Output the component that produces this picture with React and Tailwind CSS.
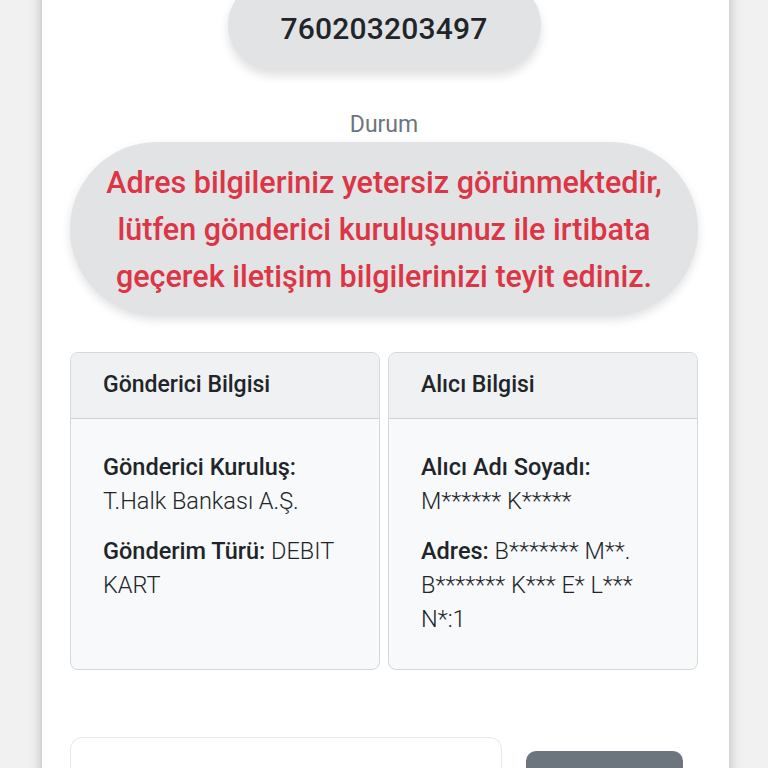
export default function App() {
    return (
        <div className="min-h-screen bg-[#f1f1f1] overflow-hidden" style={{ fontFamily: 'Roboto, "Noto Sans", sans-serif' }}>
            <div className="mx-[42px] w-[687px] bg-white shadow-[0_0_12px_rgba(0,0,0,0.25)] pl-[28px] pr-[31px] h-[800px] -mt-[20px]">
                <div className="flex justify-center">
                    <div className="w-[313px] h-[90px] rounded-full bg-[#e2e3e5] shadow-[0_6px_10px_rgba(0,0,0,0.12)] flex items-center justify-center pt-[6px]">
                        <span className="text-[30px] font-medium text-[#212529] tracking-[0.2px]">760203203497</span>
                    </div>
                </div>

                <p className="mt-[42px] text-center text-[23px] text-[#6c757d] leading-[26px]">Durum</p>

                <div className="mt-[4px] h-[174px] rounded-full bg-[#e2e3e5] shadow-[0_4px_10px_rgba(0,0,0,0.12)] flex items-center justify-center px-[20px]">
                    <p className="text-center text-[30.5px] leading-[47px] font-medium text-[#dc3545]">
                        Adres bilgileriniz yetersiz görünmektedir,<br />
                        lütfen gönderici kuruluşunuz ile irtibata<br />
                        geçerek iletişim bilgilerinizi teyit ediniz.
                    </p>
                </div>

                <div className="mt-[36px] grid grid-cols-2 gap-[8px]">
                    <InfoCard title="Gönderici Bilgisi">
                        <p><span className="font-medium">Gönderici Kuruluş:</span><br />T.Halk Bankası A.Ş.</p>
                        <p className="mt-[16px]"><span className="font-medium">Gönderim Türü:</span> DEBIT KART</p>
                    </InfoCard>
                    <InfoCard title="Alıcı Bilgisi">
                        <p><span className="font-medium">Alıcı Adı Soyadı:</span><br />M****** K*****</p>
                        <p className="mt-[16px]"><span className="font-medium">Adres:</span> B******* M**. B******* K*** E* L*** N*:1</p>
                    </InfoCard>
                </div>

                <div className="mt-[67px] flex items-start gap-[24px]">
                    <div className="w-[432px] h-[80px] rounded-[12px] border border-[#e6e6e6] bg-white"></div>
                    <div className="mt-[14px] w-[157px] h-[60px] rounded-[10px] bg-[#6c757d]"></div>
                </div>
            </div>
        </div>
    );
}

function InfoCard({ title, children }) {
    return (
        <div className="h-[318px] rounded-[8px] border border-[#d5d7d9] bg-[#f8f9fa] overflow-hidden flex flex-col">
            <div className="h-[66px] shrink-0 bg-[#f0f1f2] border-b border-[#d0d2d4] flex items-center px-[32px]">
                <span className="text-[23px] font-medium text-[#212529]">{title}</span>
            </div>
            <div className="px-[32px] pr-[20px] pt-[31px] text-[23.5px] leading-[34px] text-[#212529] font-light">
                {children}
            </div>
        </div>
    );
}
